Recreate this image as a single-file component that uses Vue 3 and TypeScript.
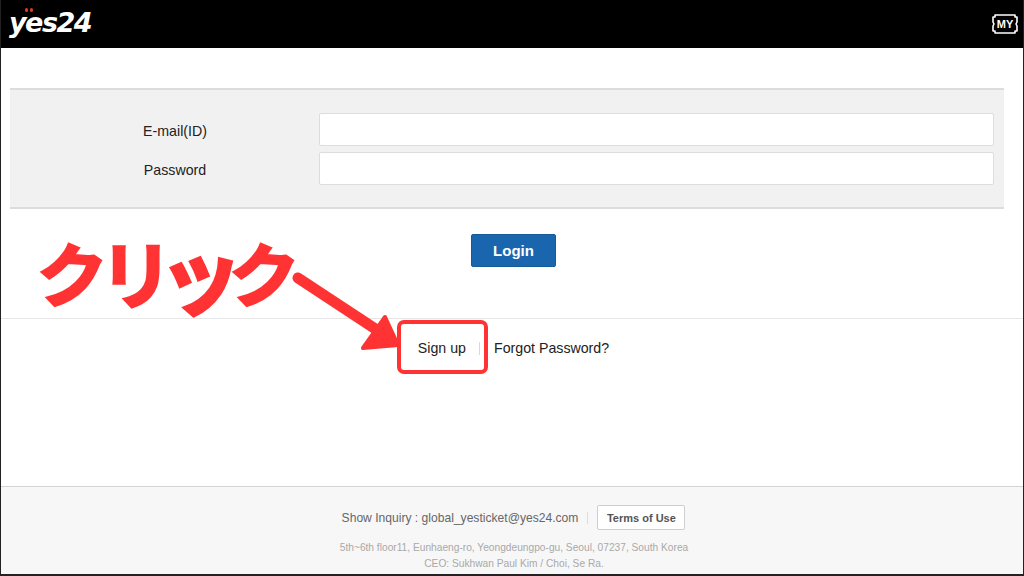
<script setup lang="ts">
const clickChars = [
  { ch: 'ク', tilt: 4, scale: 1 },
  { ch: 'リ', tilt: 0, scale: 1.05 },
  { ch: 'ッ', tilt: -4, scale: 1.2 },
  { ch: 'ク', tilt: 4, scale: 1 },
]
</script>

<template>
  <div class="page">
    <header class="top-bar">
      <div class="logo">
        <span class="logo-dots"><i></i><i></i></span>
        <span class="logo-text">yes24</span>
      </div>
      <div class="my-ticket">
        <svg width="26" height="20" viewBox="0 0 26 20" fill="none" stroke="#fff" stroke-width="1.6" stroke-linejoin="round">
          <path d="M3 1H23V3H25V8L24 10L25 12V17H23V19H3V17H1V12L2 10L1 8V3H3Z" />
        </svg>
        <span class="my-label">MY</span>
      </div>
    </header>

    <section class="form-panel">
      <label class="field-label" for="email">E-mail(ID)</label>
      <input id="email" class="field-input" type="text" />
      <label class="field-label" for="password">Password</label>
      <input id="password" class="field-input" type="password" />
    </section>

    <div class="login-row">
      <button class="login-btn">Login</button>
    </div>

    <nav class="link-row">
      <a class="link sign-up">Sign up</a>
      <span class="sep"></span>
      <a class="link">Forgot Password?</a>
    </nav>

    <footer class="site-footer">
      <div class="inquiry">
        <span>Show Inquiry : global_yesticket@yes24.com</span>
        <span class="sep light"></span>
        <button class="terms-btn">Terms of Use</button>
      </div>
      <p class="address">5th~6th floor11, Eunhaeng-ro, Yeongdeungpo-gu, Seoul, 07237, South Korea</p>
      <p class="address">CEO: Sukhwan Paul Kim / Choi, Se Ra.</p>
    </footer>

    <!-- annotation drawn on top of the screenshot -->
    <div class="click-note">
      <span
        v-for="(c, i) in clickChars"
        :key="i"
        class="click-char"
        :style="{ transform: `rotate(${c.tilt}deg) scale(${c.scale})` }"
      >{{ c.ch }}</span>
    </div>
    <svg class="arrow" width="130" height="90" viewBox="0 0 130 90">
      <path d="M6 6 L85 58" stroke="#ff3333" stroke-width="11" stroke-linecap="round" fill="none" />
      <path d="M93 45 L106 73 L71 76 Z" fill="#ff3333" stroke="#ff3333" stroke-width="4" stroke-linejoin="round" />
    </svg>
    <div class="highlight"></div>
  </div>
</template>

<style scoped>
.page {
  position: relative;
  display: flex;
  flex-direction: column;
  width: 1024px;
  height: 576px;
  box-sizing: border-box;
  overflow: hidden;
  background: #fff;
  border-left: 1px solid #222;
  border-right: 1px solid #222;
  border-bottom: 2px solid #222;
  font-family: "Liberation Sans", Arial, sans-serif;
  color: #222;
}

.top-bar {
  flex: none;
  display: flex;
  justify-content: space-between;
  align-items: center;
  height: 48px;
  margin: 0 -1px;
  padding: 0 6px 0 9px;
  background: #000;
}

.logo {
  position: relative;
  height: 48px;
  width: 90px;
}

.logo-text {
  position: absolute;
  left: 0;
  top: 5px;
  font-family: "DejaVu Sans", sans-serif;
  font-size: 27px;
  font-weight: 700;
  font-style: italic;
  line-height: 36px;
  letter-spacing: -1.5px;
  color: #fff;
}

.logo-dots {
  position: absolute;
  left: 16px;
  top: 8px;
  display: flex;
  gap: 2px;
}

.logo-dots i {
  width: 3px;
  height: 4px;
  border-radius: 2px;
  background: #d8401c;
}

.my-ticket {
  position: relative;
  display: flex;
  width: 26px;
  height: 20px;
}

.my-label {
  position: absolute;
  inset: 0;
  text-align: center;
  font-size: 11px;
  font-weight: 700;
  line-height: 20px;
  color: #fff;
}

.form-panel {
  flex: none;
  display: grid;
  grid-template-columns: 309px 675px;
  row-gap: 6px;
  align-items: center;
  margin: 40px 19px 0 9px;
  padding: 23px 0 22px;
  background: #f1f1f1;
  border-top: 2px solid #dcdcdc;
  border-bottom: 2px solid #dcdcdc;
}

.field-label {
  padding-left: 21px;
  padding-top: 2px;
  text-align: center;
  font-size: 14.2px;
}

.field-input {
  box-sizing: border-box;
  width: 675px;
  height: 33px;
  background: #fff;
  border: 1px solid #dddddd;
  border-radius: 2px;
}

.login-row {
  flex: none;
  display: flex;
  justify-content: center;
  margin-top: 25px;
  padding-left: 2px;
  padding-bottom: 51px;
  border-bottom: 1px solid #e6e6e6;
}

.login-btn {
  width: 85px;
  height: 33px;
  padding: 0 0 0 1px;
  border: 1px solid #175a98;
  border-radius: 2px;
  background: #1a66ae;
  color: #fff;
  font-family: inherit;
  font-size: 15px;
  font-weight: 700;
}

.link-row {
  flex: none;
  display: flex;
  justify-content: center;
  align-items: center;
  gap: 12px;
  margin-top: 21px;
  padding-left: 3px;
  font-size: 14.2px;
  line-height: 16px;
}

.link {
  color: #222;
}

.sep {
  width: 1px;
  height: 13px;
  background: #d8d8d8;
  margin-left: 1px;
  margin-right: 2px;
}

.site-footer {
  margin-top: auto;
  height: 88px;
  box-sizing: border-box;
  padding-top: 18px;
  padding-left: 4px;
  background: #f7f7f7;
  border-top: 1px solid #d4d4d4;
  text-align: center;
}

.inquiry {
  display: flex;
  justify-content: center;
  align-items: center;
  gap: 7px;
  margin-bottom: 10px;
  padding-right: 1px;
  font-size: 12.1px;
  color: #666;
}

.sep.light {
  height: 12px;
  background: #dddddd;
  margin: 0 2px;
}

.terms-btn {
  width: 88px;
  height: 25px;
  padding: 0;
  background: #fff;
  border: 1px solid #cfcfcf;
  border-radius: 2px;
  font-family: inherit;
  font-size: 11px;
  font-weight: 700;
  color: #555;
}

.address {
  margin: 0;
  font-size: 10.2px;
  line-height: 16px;
  color: #a9a9a9;
}

.click-note {
  position: absolute;
  left: 36px;
  top: 226px;
  display: flex;
  font-family: "Noto Sans CJK JP", sans-serif;
  font-size: 70px;
  font-weight: 700;
  line-height: 92px;
  color: #ff3333;
  -webkit-text-stroke: 2.5px #ff3333;
}

.click-char {
  display: inline-block;
  width: 64px;
  text-align: center;
}

.arrow {
  position: absolute;
  left: 291px;
  top: 272px;
}

.highlight {
  position: absolute;
  left: 396px;
  top: 320px;
  width: 91px;
  height: 54px;
  box-sizing: border-box;
  border: 4px solid #ff3333;
  border-radius: 7px;
}
</style>
